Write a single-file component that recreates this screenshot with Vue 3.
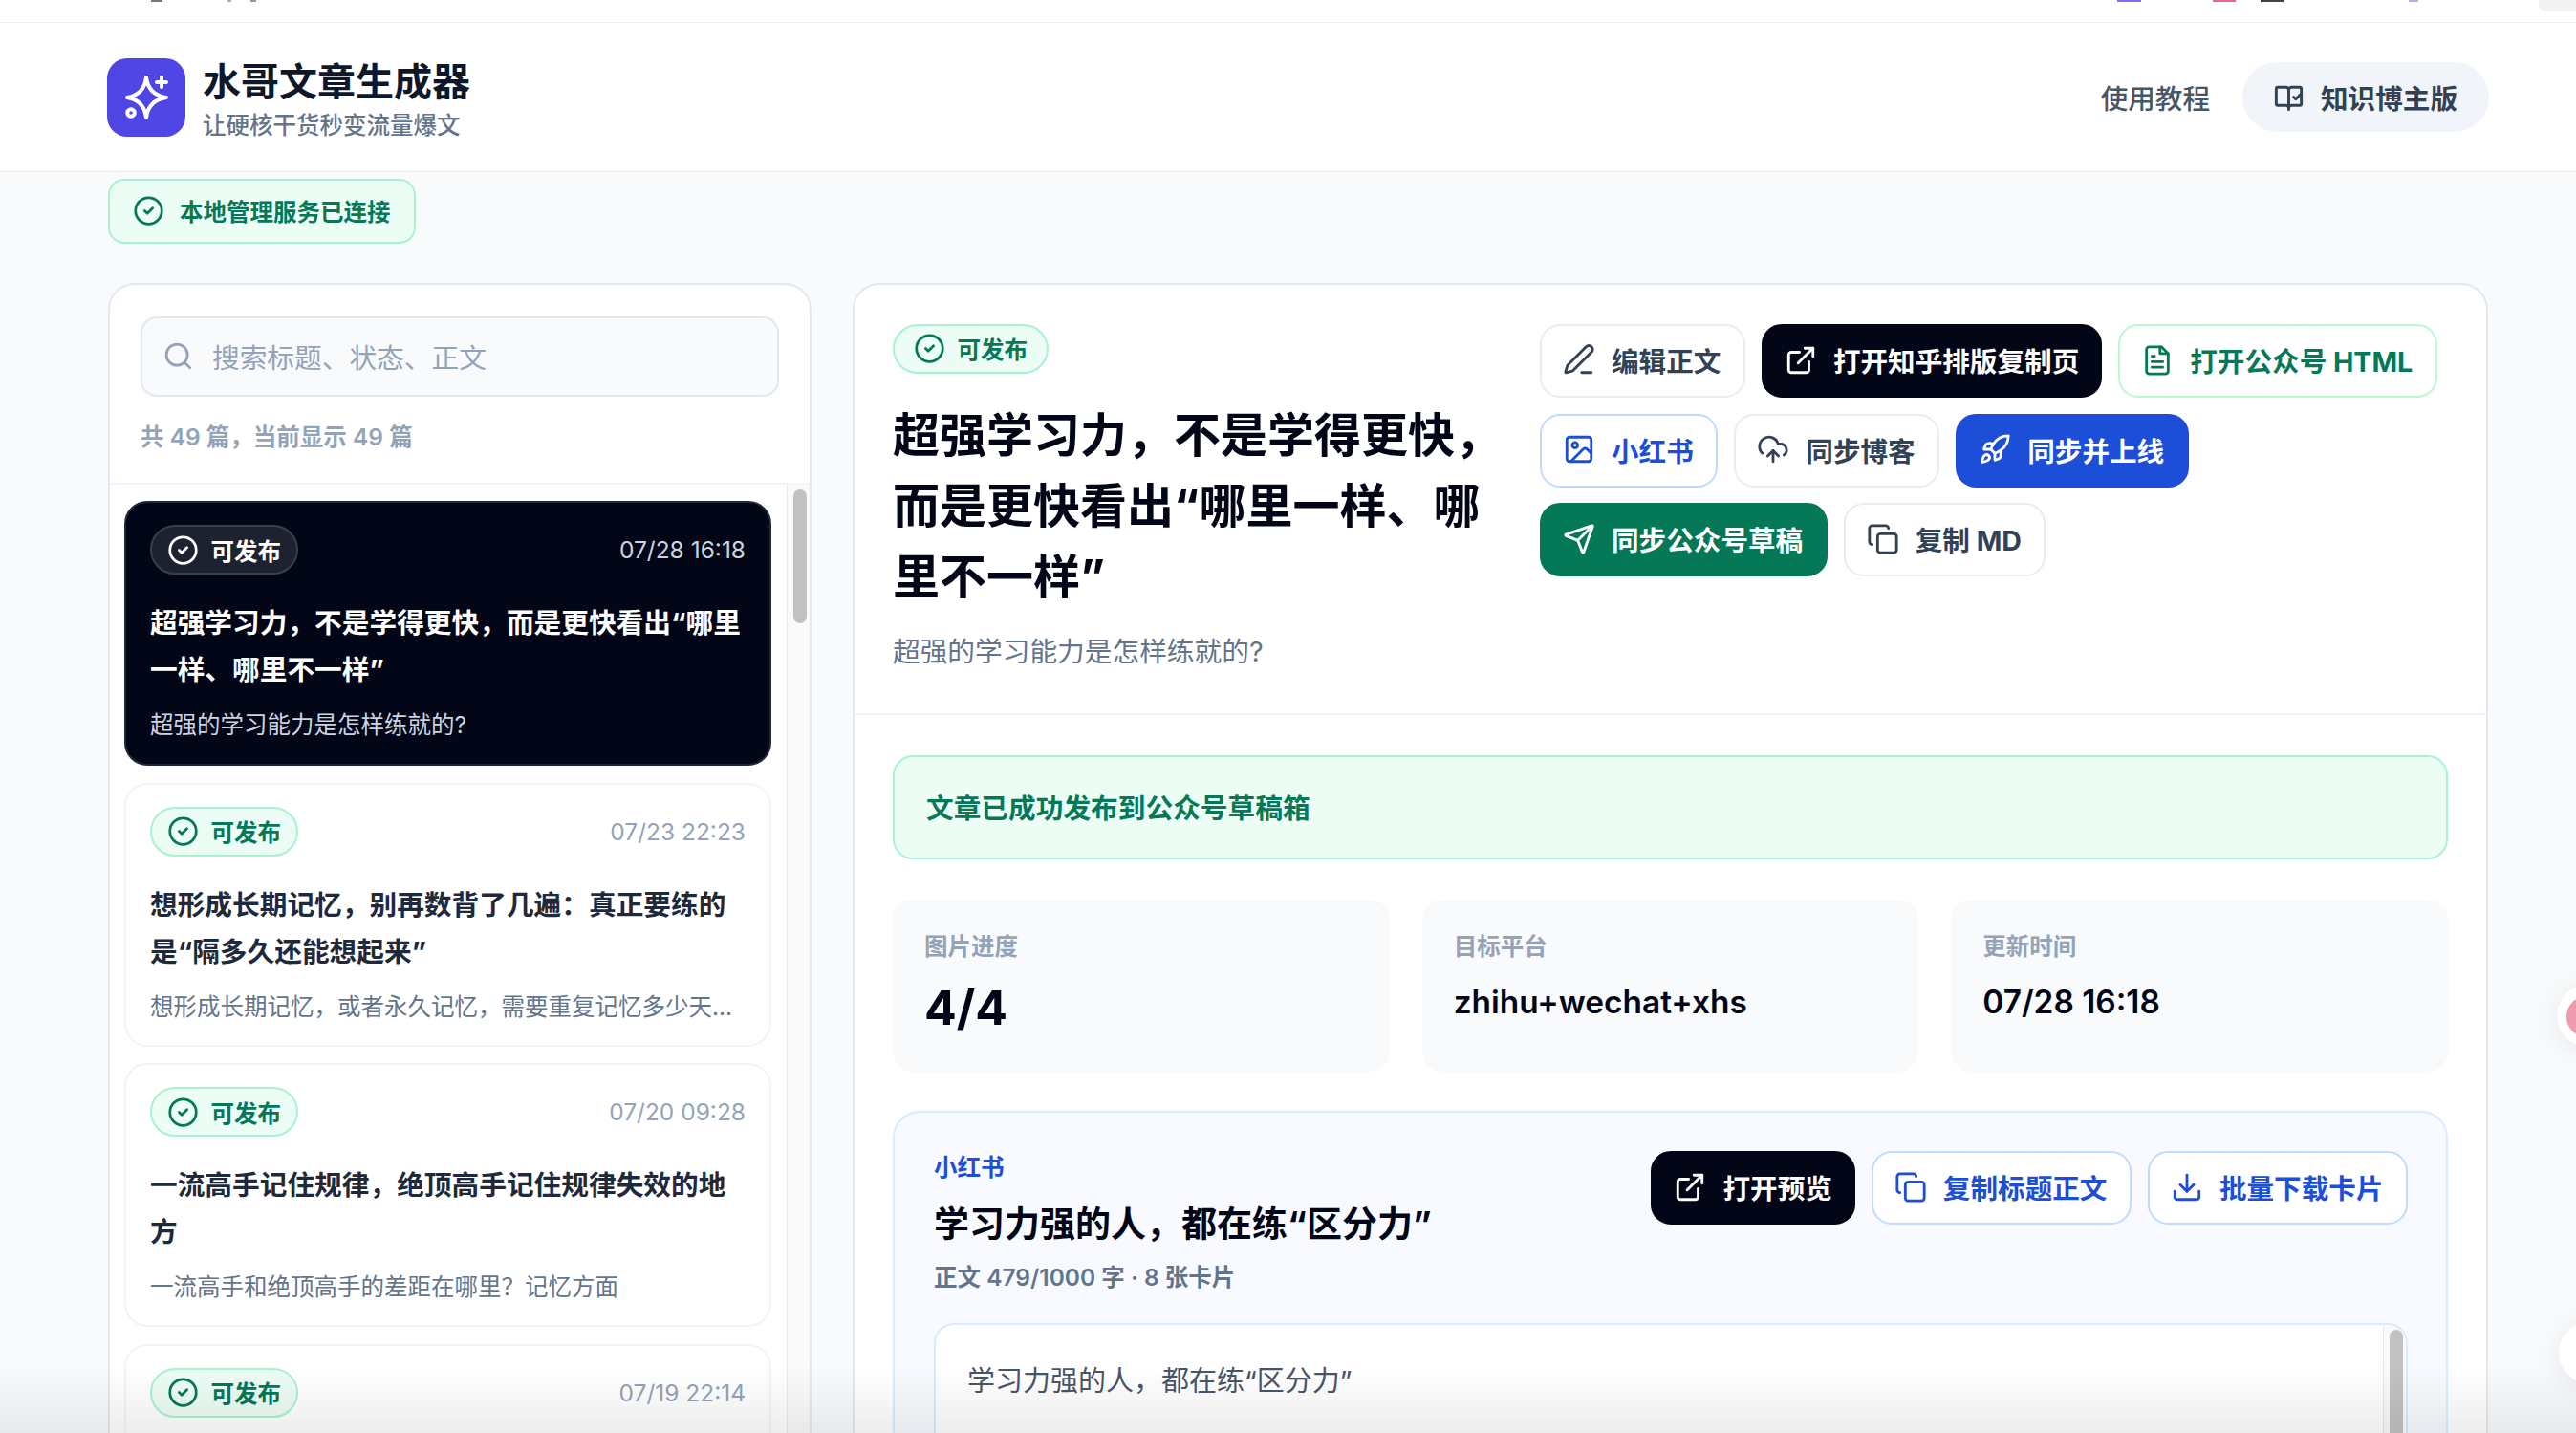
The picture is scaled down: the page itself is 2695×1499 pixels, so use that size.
<script setup>
const articles = [
  { date: '07/28 16:18', title: '超强学习力，不是学得更快，而是更快看出“哪里一样、哪里不一样”', desc: '超强的学习能力是怎样练就的?', active: true },
  { date: '07/23 22:23', title: '想形成长期记忆，别再数背了几遍：真正要练的是“隔多久还能想起来”', desc: '想形成长期记忆，或者永久记忆，需要重复记忆多少天...' },
  { date: '07/20 09:28', title: '一流高手记住规律，绝顶高手记住规律失效的地方', desc: '一流高手和绝顶高手的差距在哪里？记忆方面' },
  { date: '07/19 22:14' },
];

const stats = [
  { label: '图片进度', value: '4/4', big: true },
  { label: '目标平台', value: 'zhihu+wechat+xhs' },
  { label: '更新时间', value: '07/28 16:18' },
];
</script>

<template>
  <div class="page">
    <div class="topstrip">
      <i class="bit" style="left: 158px; width: 12px; background: #777"></i>
      <i class="bit" style="left: 238px; width: 4px; background: #aaa"></i>
      <i class="bit" style="left: 262px; width: 6px; background: #999"></i>
      <i class="bit" style="left: 2215px; width: 25px; background: #7c6cf6"></i>
      <i class="bit" style="left: 2315px; width: 24px; background: #f0609a"></i>
      <i class="bit" style="left: 2365px; width: 24px; background: #444"></i>
      <i class="bit" style="left: 2520px; width: 10px; background: #c4a5f5"></i>
      <div class="corner"></div>
    </div>
    <header class="header">
      <div class="brand">
        <div class="logo">
          <svg viewBox="0 0 82 82" width="82" height="82" fill="none" stroke="#fff" stroke-width="4" stroke-linecap="round" stroke-linejoin="round">
            <path d="M41 20c1.500 12 8 19 21 21-13 2-19.500 9-21 21-1.500-12-8-19-20-21 12-2 18.500-9 20-21z" />
            <path d="M57 20v10M52 25h10" />
            <circle cx="25" cy="57" r="3.800" />
          </svg>
        </div>
        <div class="brand-text">
          <div class="brand-name">水哥文章生成器</div>
          <div class="brand-sub">让硬核干货秒变流量爆文</div>
        </div>
      </div>
      <nav class="nav">
        <span class="nav-link">使用教程</span>
        <span class="nav-pill">
          <svg class="ic" viewBox="0 0 24 24"><path d="M12 21V7a2 2 0 0 1 2-2h6a1 1 0 0 1 1 1v11a1 1 0 0 1-1 1h-6a2 2 0 0 0-2 2 2 2 0 0 0-2-2H4a1 1 0 0 1-1-1V6a1 1 0 0 1 1-1h6a2 2 0 0 1 2 2" /><path d="m15.500 12 1.500 1.500 3-3" /></svg>
          知识博主版
        </span>
      </nav>
    </header>

    <main class="main">
      <div class="service">
        <svg class="ic" viewBox="0 0 24 24"><circle cx="12" cy="12" r="10" /><path d="m9 12 2 2 4-4" /></svg>
        本地管理服务已连接
      </div>

      <div class="columns">
        <aside class="side">
          <div class="side-top">
            <div class="search">
              <svg class="ic" viewBox="0 0 24 24"><circle cx="11" cy="11" r="8" /><path d="m21 21-4.300-4.300" /></svg>
              <span>搜索标题、状态、正文</span>
            </div>
            <div class="count">共 49 篇，当前显示 49 篇</div>
          </div>
          <div class="list-wrap">
            <div class="list">
              <article v-for="a in articles" :key="a.date" class="card" :class="{ active: a.active }">
                <div class="card-top">
                  <span class="pill">
                    <svg class="ic" viewBox="0 0 24 24"><circle cx="12" cy="12" r="10" /><path d="m9 12 2 2 4-4" /></svg>
                    可发布
                  </span>
                  <span class="date">{{ a.date }}</span>
                </div>
                <h3 v-if="a.title">{{ a.title }}</h3>
                <p v-if="a.desc">{{ a.desc }}</p>
              </article>
            </div>
            <div class="track"><div class="thumb"></div></div>
          </div>
        </aside>

        <section class="detail">
          <div class="detail-head">
            <div class="detail-title">
              <span class="pill">
                <svg class="ic" viewBox="0 0 24 24"><circle cx="12" cy="12" r="10" /><path d="m9 12 2 2 4-4" /></svg>
                可发布
              </span>
              <h1>超强学习力，不是学得更快，而是更快看出“哪里一样、哪里不一样”</h1>
              <p>超强的学习能力是怎样练就的?</p>
            </div>
            <div class="actions">
              <button class="btn">
                <svg class="ic" viewBox="0 0 24 24"><path d="M21.200 5.900a2.800 2.800 0 0 0-4-4L3.800 15.300a2 2 0 0 0-.5.800l-1.300 4.400a.5.500 0 0 0 .6.600l4.400-1.300a2 2 0 0 0 .8-.5z" /><path d="M14 21h7" /></svg>
                编辑正文
              </button>
              <button class="btn dark">
                <svg class="ic" viewBox="0 0 24 24"><path d="M15 3h6v6" /><path d="M10 14 21 3" /><path d="M18 13v6a2 2 0 0 1-2 2H5a2 2 0 0 1-2-2V8a2 2 0 0 1 2-2h6" /></svg>
                打开知乎排版复制页
              </button>
              <button class="btn green-line">
                <svg class="ic" viewBox="0 0 24 24"><path d="M15 2H6a2 2 0 0 0-2 2v16a2 2 0 0 0 2 2h12a2 2 0 0 0 2-2V7z" /><path d="M14 2v5h6" /><path d="M16 13H8M16 17H8M10 9H8" /></svg>
                打开公众号 HTML
              </button>
              <button class="btn blue-line">
                <svg class="ic" viewBox="0 0 24 24"><rect x="3" y="3" width="18" height="18" rx="2" /><circle cx="9" cy="9" r="2" /><path d="m21 15-3.100-3.100a2 2 0 0 0-2.800 0L6 21" /></svg>
                小红书
              </button>
              <button class="btn">
                <svg class="ic" viewBox="0 0 24 24"><path d="M12 13v8" /><path d="M4 14.900A7 7 0 1 1 15.700 8h1.800a4.500 4.500 0 0 1 2.500 8.200" /><path d="m8 17 4-4 4 4" /></svg>
                同步博客
              </button>
              <button class="btn blue">
                <svg class="ic" viewBox="0 0 24 24"><path d="M4.500 16.500c-1.500 1.300-2 5-2 5s3.700-.5 5-2c.7-.8.700-2.100-.1-2.900a2.200 2.200 0 0 0-2.900-.1z" /><path d="m12 15-3-3a22 22 0 0 1 2-3.900A12.900 12.900 0 0 1 22 2c0 2.700-.8 7.500-6 11a22.400 22.400 0 0 1-4 2z" /><path d="M9 12H4s.6-3 2-4c1.600-1.100 5 0 5 0M12 15v5s3-.6 4-2c1.100-1.600 0-5 0-5" /></svg>
                同步并上线
              </button>
              <button class="btn green">
                <svg class="ic" viewBox="0 0 24 24"><path d="M14.500 21.700a.5.500 0 0 0 .9 0L22 2.600a.5.500 0 0 0-.6-.6L2.300 8.500a.5.500 0 0 0 0 .9l8 3.200a2 2 0 0 1 1.100 1.100z" /><path d="M21.900 2.100 10.900 13.100" /></svg>
                同步公众号草稿
              </button>
              <button class="btn">
                <svg class="ic" viewBox="0 0 24 24"><rect x="8" y="8" width="14" height="14" rx="2" /><path d="M4 16c-1.100 0-2-.9-2-2V4c0-1.100.9-2 2-2h10c1.100 0 2 .9 2 2" /></svg>
                复制 MD
              </button>
            </div>
          </div>

          <div class="detail-body">
            <div class="alert">文章已成功发布到公众号草稿箱</div>

            <div class="stats">
              <div v-for="s in stats" :key="s.label" class="stat">
                <div class="stat-label">{{ s.label }}</div>
                <div class="stat-value" :class="{ big: s.big }">{{ s.value }}</div>
              </div>
            </div>

            <div class="xhs">
              <div class="xhs-head">
                <div>
                  <div class="xhs-tag">小红书</div>
                  <div class="xhs-title">学习力强的人，都在练“区分力”</div>
                  <div class="xhs-meta">正文 479/1000 字 · 8 张卡片</div>
                </div>
                <div class="xhs-actions">
                  <button class="btn dark">
                    <svg class="ic" viewBox="0 0 24 24"><path d="M15 3h6v6" /><path d="M10 14 21 3" /><path d="M18 13v6a2 2 0 0 1-2 2H5a2 2 0 0 1-2-2V8a2 2 0 0 1 2-2h6" /></svg>
                    打开预览
                  </button>
                  <button class="btn blue-line">
                    <svg class="ic" viewBox="0 0 24 24"><rect x="8" y="8" width="14" height="14" rx="2" /><path d="M4 16c-1.100 0-2-.9-2-2V4c0-1.100.9-2 2-2h10c1.100 0 2 .9 2 2" /></svg>
                    复制标题正文
                  </button>
                  <button class="btn blue-line">
                    <svg class="ic" viewBox="0 0 24 24"><path d="M12 15V3" /><path d="M21 15v4a2 2 0 0 1-2 2H5a2 2 0 0 1-2-2v-4" /><path d="m7 10 5 5 5-5" /></svg>
                    批量下载卡片
                  </button>
                </div>
              </div>
              <div class="xhs-text">
                <div class="xhs-copy">学习力强的人，都在练“区分力”</div>
                <div class="track inner"><div class="thumb"></div></div>
              </div>
            </div>
          </div>
        </section>
      </div>
    </main>

    <div class="float pink"></div>
    <div class="float plain"></div>
    <div class="fade"></div>
  </div>
</template>

<style>
html, body { margin: 0; background: #f8fafc; }
</style>

<style scoped>
.page {
  position: relative;
  height: 1499px;
  overflow: hidden;
  background: #f8fafc;
  font-family: Inter, "Noto Sans CJK SC", sans-serif;
  color: #0f172a;
}
.topstrip {
  position: relative;
  height: 23px;
  background: #fff;
  border-bottom: 1px solid #eef0f3;
}
.bit { position: absolute; top: 0; height: 2px; }
.corner {
  position: absolute;
  top: 0;
  right: 0;
  width: 39px;
  height: 12px;
  background: #f3f3f3;
  border-bottom-left-radius: 8px;
}
.header {
  height: 156px;
  box-sizing: border-box;
  padding: 0 91px 0 112px;
  display: flex;
  align-items: center;
  justify-content: space-between;
  background: #fff;
  border-bottom: 1px solid #e2e8f0;
}
.brand { display: flex; align-items: center; gap: 18px; }
.logo {
  width: 82px;
  height: 82px;
  border-radius: 21px;
  background: #4f46e5;
}
.logo svg { display: block; }
.brand-text { padding-top: 4px; }
.brand-name { font-size: 40px; line-height: 50px; font-weight: 700; color: #0f172a; }
.brand-sub { margin-top: 4px; font-size: 24.5px; line-height: 32px; color: #64748b; font-weight: 500; }
.nav { display: flex; align-items: center; gap: 34px; }
.nav-link { font-size: 28.6px; font-weight: 500; color: #475569; }
.nav-pill {
  height: 73px;
  padding: 0 33px 0 31px;
  display: flex;
  align-items: center;
  gap: 16px;
  border-radius: 37px;
  background: #f1f5f9;
  font-size: 28.6px;
  font-weight: 700;
  color: #334155;
}
.ic {
  width: 33px;
  height: 33px;
  flex: none;
  fill: none;
  stroke: currentColor;
  stroke-width: 2;
  stroke-linecap: round;
  stroke-linejoin: round;
}
.nav-pill .ic { width: 35px; height: 35px; }
.main { padding: 7px 92px 0 113px; }
.service {
  display: inline-flex;
  align-items: center;
  gap: 16px;
  height: 68px;
  box-sizing: border-box;
  padding: 0 24px 2px 24px;
  border: 2px solid #a7f3d0;
  border-radius: 17px;
  background: #ecfdf5;
  color: #047857;
  font-size: 24.5px;
  font-weight: 700;
  vertical-align: top;
}
.columns {
  margin-top: 41px;
  display: grid;
  grid-template-columns: 736px 1fr;
  gap: 43px;
}
.side, .detail {
  height: 1300px;
  box-sizing: border-box;
  background: #fff;
  border: 2px solid #e2e8f0;
  border-radius: 28px;
  overflow: hidden;
}
.side-top { padding: 33px 32px 0; height: 209px; box-sizing: border-box; border-bottom: 2px solid #f1f5f9; }
.search {
  height: 84px;
  box-sizing: border-box;
  padding: 0 21px 2px;
  display: flex;
  align-items: center;
  gap: 19px;
  background: #f8fafc;
  border: 2px solid #e2e8f0;
  border-radius: 17px;
  color: #94a3b8;
  font-size: 28.7px;
}
.count { margin-top: 23px; font-size: 24.5px; font-weight: 600; color: #94a3b8; }
.list-wrap { display: flex; height: 100%; }
.list {
  flex: 1;
  min-width: 0;
  box-sizing: border-box;
  padding: 17px 16px 17px 15px;
  display: flex;
  flex-direction: column;
  gap: 17.5px;
}
.track {
  flex: none;
  width: 24px;
  box-sizing: border-box;
  padding: 5px 4px 5px 6px;
  background: #fafafa;
  border-left: 1px solid #e8e8e8;
}
.thumb { height: 140px; width: 14px; border-radius: 7px; background: #c1c1c1; }
.card {
  flex: none;
  box-sizing: border-box;
  height: 276px;
  padding: 23px 25px;
  border: 2px solid #f1f5f9;
  border-radius: 24px;
  background: #fff;
}
.card.active { height: 277px; background: #020617; border-color: #1e293b; }
.card-top { display: flex; align-items: center; justify-content: space-between; }
.pill {
  display: inline-flex;
  align-items: center;
  gap: 13px;
  height: 52px;
  box-sizing: border-box;
  padding: 0 20px 2px 19.5px;
  border: 2px solid #a7f3d0;
  border-radius: 26px;
  background: #ecfdf5;
  color: #047857;
  font-size: 24.5px;
  font-weight: 700;
}
.card .pill { padding: 0 16px 0 15.5px; }
.active .pill { background: #1e2230; border-color: #3a3f4e; color: #fff; }
.date { font-size: 24.5px; color: #94a3b8; }
.active .date { color: #cbd5e1; }
.card h3 {
  margin: 26px 0 0;
  font-size: 28.7px;
  line-height: 49px;
  font-weight: 700;
  color: #1e293b;
}
.active h3 { color: #fff; }
.card p {
  margin: 15px 0 0;
  font-size: 24.5px;
  line-height: 37px;
  color: #64748b;
  white-space: nowrap;
}
.active p { color: #cbd5e1; }
.detail-head {
  height: 450px;
  box-sizing: border-box;
  padding: 41px 40px 0;
  display: grid;
  grid-template-columns: 640px 1fr;
  gap: 37px;
  border-bottom: 2px solid #f1f5f9;
}
.detail-title h1 {
  margin: 28px 0 0;
  font-size: 49px;
  line-height: 74px;
  font-weight: 700;
  color: #020617;
}
.detail-title p { margin: 20px 0 0; font-size: 28.7px; line-height: 42px; color: #64748b; }
.actions { display: flex; flex-wrap: wrap; gap: 16.5px 17px; align-content: flex-start; }
.btn {
  height: 77px;
  box-sizing: border-box;
  padding: 0 23.5px 2px 22px;
  display: inline-flex;
  align-items: center;
  gap: 17px;
  font: inherit;
  font-size: 28.6px;
  font-weight: 700;
  color: #334155;
  background: #fff;
  border: 2px solid #e8edf4;
  border-radius: 21px;
  white-space: nowrap;
}
.btn .ic { width: 34px; height: 34px; }
.btn.dark { background: #020617; border-color: #020617; color: #fff; padding-right: 22px; }
.btn.blue { background: #1d4ed8; border-color: #1d4ed8; color: #fff; }
.btn.green { background: #047857; border-color: #047857; color: #fff; }
.btn.green-line { border-color: #bbf7d0; color: #047857; }
.btn.blue-line { border-color: #bfdbfe; color: #1d4ed8; }
.detail-body { padding: 42px 40px 0; }
.alert {
  height: 109px;
  box-sizing: border-box;
  padding: 0 33px 2px;
  display: flex;
  align-items: center;
  background: #ecfdf5;
  border: 2px solid #a7f3d0;
  border-radius: 21px;
  color: #047857;
  font-size: 28.7px;
  font-weight: 700;
}
.stats {
  margin-top: 42px;
  display: grid;
  grid-template-columns: repeat(3, 1fr);
  gap: 34px;
}
.stat {
  height: 180px;
  box-sizing: border-box;
  padding: 33px;
  background: #f8fafc;
  border-radius: 21px;
}
.stat-label { font-size: 24.5px; line-height: 32px; font-weight: 700; color: #94a3b8; }
.stat-value { margin-top: 18px; font-size: 33.4px; line-height: 48px; font-weight: 600; color: #020617; }
.stat-value.big { margin-top: 16px; font-size: 50px; line-height: 64px; font-weight: 700; }
.xhs {
  margin-top: 41px;
  height: 600px;
  box-sizing: border-box;
  padding: 40px 40px 40px 41px;
  background: #f8faff;
  border: 2px solid #dbeafe;
  border-radius: 28px;
}
.xhs-head { display: flex; justify-content: space-between; align-items: flex-start; }
.xhs-tag { font-size: 24.5px; line-height: 34px; font-weight: 700; color: #1d4ed8; }
.xhs-title { margin-top: 15px; font-size: 37px; line-height: 56px; font-weight: 700; color: #020617; }
.xhs-meta { margin-top: 9px; font-size: 24.5px; line-height: 36px; font-weight: 600; color: #64748b; }
.xhs-actions { display: flex; gap: 17px; }
.xhs-text {
  margin-top: 30px;
  height: 400px;
  display: flex;
  background: #fff;
  border: 2px solid #dbeafe;
  border-radius: 21px;
  overflow: hidden;
}
.xhs-copy { flex: 1; padding: 38px 33px; font-size: 29px; line-height: 42px; color: #475569; }
.track.inner .thumb { height: 240px; }
.float {
  position: absolute;
  border-radius: 50%;
  background: #fff;
  box-shadow: 0 4px 30px rgba(15, 23, 42, 0.08);
}
.float.pink {
  top: 1030px;
  left: 2675px;
  width: 65px;
  height: 65px;
}
.float.pink::after {
  content: '';
  position: absolute;
  top: 12px;
  left: 10px;
  width: 43px;
  height: 43px;
  border-radius: 50%;
  background: #f199b0;
}
.float.plain {
  top: 1382px;
  left: 2677px;
  width: 66px;
  height: 66px;
}
.fade {
  position: absolute;
  left: 0;
  right: 0;
  bottom: 0;
  height: 70px;
  background: linear-gradient(to bottom, rgba(0, 0, 0, 0), rgba(0, 0, 0, 0.07));
  pointer-events: none;
}
</style>
